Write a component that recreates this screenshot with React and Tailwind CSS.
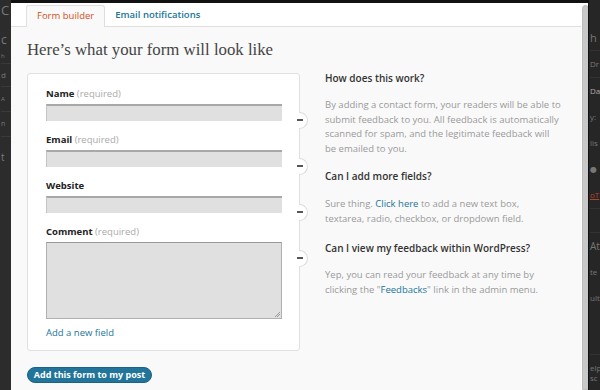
import React from "react";

const UI = { fontFamily: '"Open Sans", "DejaVu Sans", sans-serif' };
const SERIF = { fontFamily: '"Liberation Serif", "DejaVu Serif", serif' };

function Bubble({ top }) {
  return (
    <>
      <div
        className="absolute right-[-9px] w-[9px] h-[17px] bg-white border border-l-0 border-[#dcdcdc] rounded-r-full"
        style={{ top }}
      />
      <div
        className="absolute right-[-4px] w-[6px] h-[2px] bg-[#555]"
        style={{ top: top + 7 }}
      />
    </>
  );
}

function Field({ label, required, textarea }) {
  return (
    <div className="relative">
      <div className="h-[14px] leading-[14px] text-[9.5px] mb-[3px]">
        <span className="font-bold text-[#222]">{label}</span>
        {required && <span className="text-[#aaa]"> (required)</span>}
      </div>
      {textarea ? (
        <div className="relative w-[236px] h-[77px] bg-[#e0e0e0] border border-[#b0b0b0] border-t-[#999]">
          <svg className="absolute right-[1px] bottom-[1px]" width="6" height="6" viewBox="0 0 6 6">
            <path d="M1 6 L6 1 M3 6 L6 3" stroke="#888" strokeWidth="0.8" />
          </svg>
        </div>
      ) : (
        <div className="w-[236px] h-[17px] bg-[#e0e0e0] border-t-[2px] border-l border-[#a8a8a8] border-l-[#c4c4c4]" />
      )}
    </div>
  );
}

export default function App() {
  return (
    <div className="w-[600px] h-[390px] overflow-hidden flex bg-[#222]" style={UI}>
      {/* left backdrop strip */}
      <div className="w-[11px] shrink-0 bg-[#2c2c2c] overflow-hidden text-[#7a7a7a] pl-[1px]">
        <div className="text-[13px] leading-[18px] mt-[1px]">C</div>
        <div className="text-[12px] leading-[18px] mt-[12px]">c</div>
        <div className="text-[6px] leading-[10px] mt-[2px]">h</div>
        <div className="border-t border-[#3a3a3a] mt-[2px] text-[8px] leading-[22px]">d</div>
        <div className="border-t border-[#3a3a3a] text-[6px] leading-[24px]">A</div>
        <div className="border-t border-[#3a3a3a] text-[7px] leading-[24px]">n</div>
        <div className="border-t border-[#3a3a3a] text-[10px] leading-[40px]">t</div>
      </div>

      {/* modal */}
      <div className="w-[577px] shrink-0 flex flex-col border-t-[3px] border-[#111] bg-[#f9f9f9]">
        <div className="flex flex-1 min-h-0">
          <div className="flex-1 flex flex-col">
            {/* header with tabs */}
            <div className="h-[24px] bg-white border-b border-[#dfdfdf] flex items-end pl-[15px] shrink-0">
              <div className="h-[22px] -mb-px px-[10px] bg-[#f9f9f9] border border-b-0 border-[#dfdfdf] rounded-t-[3px] flex items-center text-[9.5px] text-[#d54e21]">
                Form builder
              </div>
              <div className="h-[22px] px-[10px] flex items-center text-[9.5px] font-semibold text-[#21759b]">
                Email notifications
              </div>
            </div>

            {/* body */}
            <div className="flex-1 px-[16px]">
              <h1 className="text-[16.8px] leading-[22px] text-[#444] mt-[12px]" style={SERIF}>
                Here’s what your form will look like
              </h1>

              <div className="flex mt-[12px]">
                {/* form card */}
                <div className="relative w-[273px] h-[278px] bg-white border border-[#e0e0e0] rounded-[3px] pl-[18px] pt-[13px] shrink-0">
                  <div className="relative">
                    <Field label="Name" required />
                    <Bubble top={25} />
                  </div>
                  <div className="relative mt-[12px]">
                    <Field label="Email" required />
                    <Bubble top={25} />
                  </div>
                  <div className="relative mt-[12px]">
                    <Field label="Website" />
                    <Bubble top={25} />
                  </div>
                  <div className="relative mt-[12px]">
                    <Field label="Comment" required textarea />
                    <Bubble top={25} />
                  </div>
                  <div className="mt-[7px] text-[9.5px] leading-[14px] text-[#21759b]">Add a new field</div>
                </div>

                {/* help column */}
                <div className="ml-[25px] w-[240px] text-[9.5px] -mt-[2px]">
                  <div className="font-semibold text-[#333] text-[10px] leading-[14px] mb-[13px]">How does this work?</div>
                  <p className="text-[#999] leading-[14.5px] mb-[13px]">
                    By adding a contact form, your readers will be able to<br />
                    submit feedback to you. All feedback is automatically<br />
                    scanned for spam, and the legitimate feedback will<br />
                    be emailed to you.
                  </p>
                  <div className="font-semibold text-[#333] text-[10px] leading-[14px] mb-[14px]">Can I add more fields?</div>
                  <p className="text-[#999] leading-[14.5px] mb-[15px]">
                    Sure thing. <span className="text-[#21759b]">Click here</span> to add a new text box,<br />
                    textarea, radio, checkbox, or dropdown field.
                  </p>
                  <div className="font-semibold text-[#333] text-[10px] leading-[14px] mb-[13px]">Can I view my feedback within WordPress?</div>
                  <p className="text-[#999] leading-[14.5px]">
                    Yep, you can read your feedback at any time by<br />
                    clicking the "<span className="text-[#21759b]">Feedbacks</span>" link in the admin menu.
                  </p>
                </div>
              </div>

              <button className="mt-[16px] h-[16px] w-[125px] rounded-full bg-[#21759b] border border-[#1b6385] text-white text-[9px] font-bold leading-[14px]">
                Add this form to my post
              </button>
            </div>
          </div>
          {/* scrollbar */}
          <div className="w-[9px] shrink-0 bg-white pl-[1px] pr-[1px] pt-[2px]">
            <div className="h-full w-[7px] bg-[#c8c8c8] rounded-t-full border border-[#bbb]" />
          </div>
        </div>
      </div>

      {/* right backdrop strip */}
      <div className="flex-1 bg-[#262626] border-l border-[#111] overflow-hidden text-[#777] text-[8px] pl-[1px]">
        <div className="h-[26px]" />
        <div className="text-[11px] leading-[24px]">h</div>
        <div className="border-t border-[#333] leading-[26px]">Dr</div>
        <div className="border-t border-[#333] leading-[26px] text-[#aaa]">Da</div>
        <div className="leading-[26px]">y:</div>
        <div className="leading-[26px]">lis</div>
        <div className="leading-[26px]">●</div>
        <div className="leading-[26px] text-[#b0452a] underline">oT</div>
        <div className="border-t border-[#333] h-[24px]" />
        <div className="border-t border-[#333] text-[10px] leading-[26px]">At</div>
        <div className="leading-[26px]">te</div>
        <div className="leading-[26px]">ult</div>
        <div className="h-[44px] border-b border-[#333]" />
        <div className="leading-[10px] mt-[8px]">elp</div>
        <div className="leading-[10px]">sc</div>
      </div>
    </div>
  );
}
